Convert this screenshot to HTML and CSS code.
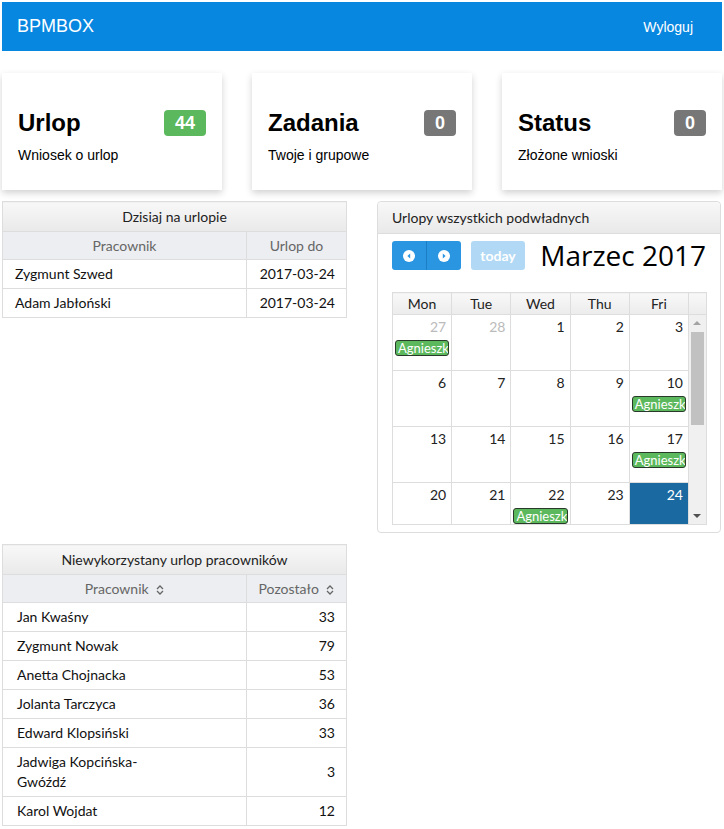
FILE: index.html
```html
<!DOCTYPE html>
<html lang="pl">
<head>
    <meta charset="UTF-8">
    <title>BPMBOX</title>
    <link rel="stylesheet" href="styles.css">
</head>
<body>
    <nav class="navbar">
        <span class="brand">BPMBOX</span>
        <a class="logout" href="#">Wyloguj</a>
    </nav>

    <div class="cards">
        <div class="card">
            <div class="card-head">
                <h2>Urlop</h2>
                <span class="badge green">44</span>
            </div>
            <p>Wniosek o urlop</p>
        </div>
        <div class="card">
            <div class="card-head">
                <h2>Zadania</h2>
                <span class="badge gray">0</span>
            </div>
            <p>Twoje i grupowe</p>
        </div>
        <div class="card">
            <div class="card-head">
                <h2>Status</h2>
                <span class="badge gray">0</span>
            </div>
            <p>Złożone wnioski</p>
        </div>
    </div>

    <div class="main">
        <table class="grid-table">
            <colgroup><col><col class="col2"></colgroup>
            <tr><th class="caption" colspan="2">Dzisiaj na urlopie</th></tr>
            <tr class="head"><th>Pracownik</th><th>Urlop do</th></tr>
            <tr><td>Zygmunt Szwed</td><td class="num">2017-03-24</td></tr>
            <tr><td>Adam Jabłoński</td><td class="num">2017-03-24</td></tr>
        </table>

        <div class="panel">
            <div class="panel-head">Urlopy wszystkich podwładnych</div>
            <div class="panel-body">
                <div class="toolbar">
                    <div class="btn-group">
                        <button class="btn">
                            <svg width="12" height="12" viewBox="0 0 12 12"><circle cx="6" cy="6" r="6" fill="#fff"/><path d="M7.2 3.4 L4.4 6 L7.2 8.6 Z" fill="#2a95e0"/></svg>
                        </button>
                        <button class="btn">
                            <svg width="12" height="12" viewBox="0 0 12 12"><circle cx="6" cy="6" r="6" fill="#fff"/><path d="M4.8 3.4 L7.6 6 L4.8 8.6 Z" fill="#2a95e0"/></svg>
                        </button>
                    </div>
                    <button class="btn today">today</button>
                    <h3 class="month">Marzec 2017</h3>
                </div>

                <div class="calendar">
                    <table class="cal">
                        <tr class="cal-head">
                            <th>Mon</th><th>Tue</th><th>Wed</th><th>Thu</th><th>Fri</th><th class="sb"></th>
                        </tr>
                        <tr>
                            <td class="other">27<span class="event">Agnieszka</span></td>
                            <td class="other">28</td>
                            <td>1</td>
                            <td>2</td>
                            <td>3</td>
                            <td class="scroll" rowspan="4">
                                <div class="scrollbar">
                                    <span class="arrow up"></span>
                                    <span class="thumb"></span>
                                    <span class="arrow down"></span>
                                </div>
                            </td>
                        </tr>
                        <tr>
                            <td>6</td><td>7</td><td>8</td><td>9</td>
                            <td>10<span class="event">Agnieszka</span></td>
                        </tr>
                        <tr>
                            <td>13</td><td>14</td><td>15</td><td>16</td>
                            <td>17<span class="event">Agnieszka</span></td>
                        </tr>
                        <tr class="last">
                            <td>20</td><td>21</td>
                            <td>22<span class="event">Agnieszka</span></td>
                            <td>23</td>
                            <td class="today-cell">24</td>
                        </tr>
                    </table>
                </div>
            </div>
        </div>

        <table class="grid-table">
            <colgroup><col><col class="col2"></colgroup>
            <tr><th class="caption" colspan="2">Niewykorzystany urlop pracowników</th></tr>
            <tr class="head">
                <th>Pracownik <svg class="sort" width="8" height="10" viewBox="0 0 8 10"><path d="M1 4 L4 1 L7 4 M1 6 L4 9 L7 6" fill="none" stroke="#666" stroke-width="1.3"/></svg></th>
                <th>Pozostało <svg class="sort" width="8" height="10" viewBox="0 0 8 10"><path d="M1 4 L4 1 L7 4 M1 6 L4 9 L7 6" fill="none" stroke="#666" stroke-width="1.3"/></svg></th>
            </tr>
            <tr><td class="name">Jan Kwaśny</td><td class="num">33</td></tr>
            <tr><td class="name">Zygmunt Nowak</td><td class="num">79</td></tr>
            <tr><td class="name">Anetta Chojnacka</td><td class="num">53</td></tr>
            <tr><td class="name">Jolanta Tarczyca</td><td class="num">36</td></tr>
            <tr><td class="name">Edward Klopsiński</td><td class="num">33</td></tr>
            <tr><td class="name"><span class="wrap">Jadwiga Kopcińska-Gwóźdź</span></td><td class="num">3</td></tr>
            <tr><td class="name">Karol Wojdat</td><td class="num">12</td></tr>
        </table>
    </div>
</body>
</html>
```

FILE: styles.css
```css
body {
    margin: 0;
    padding: 2px;
    font-family: "Liberation Sans", Arial, sans-serif;
    color: #000;
    background: #fff;
}
.navbar {
    display: flex;
    justify-content: space-between;
    align-items: center;
    height: 49px;
    padding: 0 29px 0 15px;
    background-color: #0787e0;
    color: #fff;
}
.brand {
    font-size: 18px;
}
.logout {
    color: #fff;
    text-decoration: none;
    font-size: 14px;
}
.cards {
    display: grid;
    grid-template-columns: repeat(3, 220px);
    column-gap: 30px;
    margin-top: 22px;
}
.card {
    height: 117px;
    box-sizing: border-box;
    padding: 37px 16px 0 16px;
    background: #fff;
    box-shadow: 0 3px 7px rgba(0, 0, 0, 0.18);
}
.card-head {
    display: flex;
    justify-content: space-between;
    align-items: center;
    height: 26px;
}
.card h2 {
    margin: 0;
    font-size: 24px;
    font-weight: bold;
}
.card p {
    margin: 9px 0 0;
    font-size: 14px;
    line-height: 20px;
}
.badge {
    min-width: 26px;
    height: 26px;
    line-height: 26px;
    padding: 0 8px;
    box-sizing: border-box;
    border-radius: 4px;
    color: #fff;
    font-weight: bold;
    font-size: 18px;
    text-align: center;
}
.badge.green {
    width: 42px;
    background-color: #5cb85c;
}
.badge.gray {
    width: 32px;
    padding: 0;
    background-color: #777;
}
.main {
    display: grid;
    grid-template-columns: 344px 344px;
    column-gap: 31px;
    row-gap: 11px;
    margin-top: 11px;
    align-items: start;
}
.grid-table {
    width: 345px;
    border-collapse: collapse;
    font-family: Lato, "Open Sans", sans-serif;
    font-size: 14px;
    table-layout: fixed;
}
.grid-table .col2 {
    width: 100px;
}
.grid-table th,
.grid-table td {
    border: 1px solid #ddd;
}
.grid-table th {
    padding: 0;
    line-height: 20px;
}
.grid-table .caption {
    height: 29px;
    font-weight: normal;
    color: #222;
    background: linear-gradient(#f8f8f8, #e9e9e9);
}
.grid-table .head th {
    height: 27px;
    font-weight: normal;
    color: #666;
    background-color: #eceef1;
}
.grid-table td {
    height: 20px;
    line-height: 20px;
    padding: 4px 12px;
    color: #111;
}
.grid-table td.name {
    padding-left: 14px;
}
.grid-table td.num {
    text-align: right;
    padding-right: 11px;
}
.wrap {
    display: inline-block;
    max-width: 150px;
}
.sort {
    margin-left: 4px;
    vertical-align: -1px;
}
.panel {
    border: 1px solid #ddd;
    border-radius: 4px;
    background: #fff;
}
.panel-head {
    height: 31px;
    line-height: 31px;
    padding: 0 14px;
    font-family: Lato, sans-serif;
    font-size: 14px;
    color: #222;
    border-bottom: 1px solid #ddd;
    background: linear-gradient(#f8f8f8, #e9e9e9);
    border-radius: 4px 4px 0 0;
}
.panel-body {
    padding: 7px 14px 7px 14px;
}
.toolbar {
    display: flex;
    align-items: center;
    height: 29px;
}
.btn-group {
    display: flex;
}
.btn {
    height: 29px;
    border: none;
    padding: 0;
    background-color: #2a95e0;
    cursor: pointer;
    display: flex;
    align-items: center;
    justify-content: center;
}
.btn-group .btn {
    width: 34px;
}
.btn-group .btn:first-child {
    width: 35px;
    border-radius: 3px 0 0 3px;
    border-right: 1px solid #1c7fc6;
}
.btn-group .btn:last-child {
    border-radius: 0 3px 3px 0;
}
.btn.today {
    width: 54px;
    margin-left: 10px;
    border-radius: 3px;
    background-color: #b1d9f5;
    color: #fff;
    font-family: Lato, sans-serif;
    font-weight: bold;
    font-size: 14px;
}
.month {
    margin: 0 0 0 auto;
    font-family: "Open Sans", sans-serif;
    font-weight: normal;
    font-size: 28px;
    line-height: 29px;
    color: #000;
}
.calendar {
    margin-top: 22px;
}
.cal {
    width: 315px;
    border-collapse: collapse;
    table-layout: fixed;
    font-family: Lato, sans-serif;
    font-size: 14px;
}
.cal th,
.cal td {
    border: 1px solid #ddd;
}
.cal-head th {
    height: 21px;
    padding: 0;
    line-height: 20px;
    font-weight: normal;
    color: #222;
    background: linear-gradient(#f8f8f8, #ececec);
}
.cal-head th.sb {
    width: 17px;
}
.cal td {
    height: 52px;
    padding: 3px 5px 0 2px;
    vertical-align: top;
    text-align: right;
    color: #222;
    line-height: 18px;
}
.cal tr.last td {
    height: 38px;
}
.cal td.other {
    color: #bbb;
}
.cal td.today-cell {
    background-color: #1a69a1;
    color: #fff;
}
.event {
    display: block;
    margin: 4px -3px 0 0;
    height: 16px;
    line-height: 15px;
    box-sizing: border-box;
    padding: 0 0 0 2px;
    overflow: hidden;
    white-space: nowrap;
    text-align: left;
    background-color: #5cb85c;
    color: #fff;
    border: 1px solid #2a3a2a;
    border-radius: 3px;
    font-size: 13px;
}
.cal td.scroll {
    padding: 0;
    background-color: #f0f0f0;
    vertical-align: top;
}
.scrollbar {
    position: relative;
    height: 209px;
}
.arrow {
    position: absolute;
    left: 4px;
    width: 0;
    height: 0;
    border-left: 4px solid transparent;
    border-right: 4px solid transparent;
}
.arrow.up {
    top: 6px;
    border-bottom: 4px solid #a3a3a3;
}
.arrow.down {
    bottom: 6px;
    border-top: 4px solid #505050;
}
.thumb {
    position: absolute;
    top: 17px;
    left: 2px;
    width: 13px;
    height: 93px;
    background-color: #c1c1c1;
}
```
